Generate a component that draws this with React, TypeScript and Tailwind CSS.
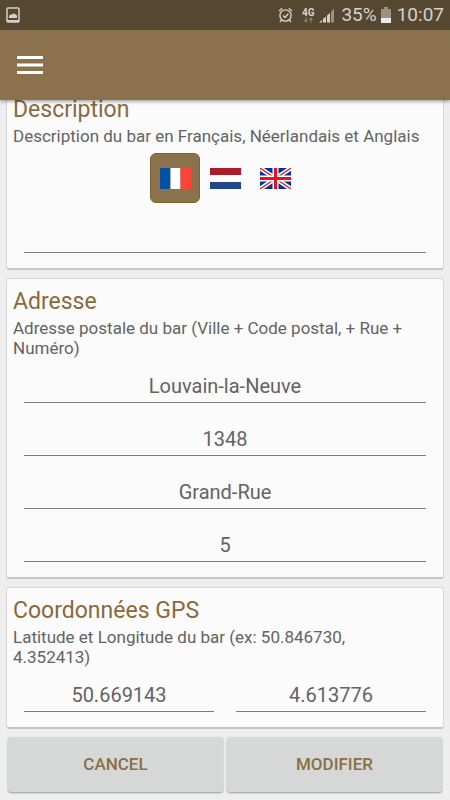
import React, { useState } from 'react';

type Lang = 'fr' | 'nl' | 'en';

const FlagFr = () => (
  <svg width="31" height="21" viewBox="0 0 31 21" aria-hidden="true">
    <rect width="10.500" height="21" fill="#0052a5" />
    <rect x="10.500" width="10" height="21" fill="#fff" />
    <rect x="20.500" width="10.500" height="21" fill="#fb4436" />
  </svg>
);

const FlagNl = () => (
  <svg width="31" height="21" viewBox="0 0 31 21" aria-hidden="true">
    <rect width="31" height="21" fill="#fff" />
    <rect width="31" height="7" fill="#ae1c28" />
    <rect y="14" width="31" height="7" fill="#21468b" />
  </svg>
);

const FlagEn = () => (
  <svg width="31" height="21" viewBox="0 0 31 21" aria-hidden="true">
    <rect width="31" height="21" fill="#0a2c9c" />
    <path d="M0 0L31 21M31 0L0 21" stroke="#fff" strokeWidth="4.4" />
    <path d="M0 0L31 21M31 0L0 21" stroke="#dc2030" strokeWidth="1.4" />
    <path d="M15.500 0V21M0 10.500H31" stroke="#fff" strokeWidth="6" />
    <path d="M15.500 0V21M0 10.500H31" stroke="#dc1428" strokeWidth="3" />
  </svg>
);

const flags: { id: Lang; label: string; icon: React.ReactNode }[] = [
  { id: 'fr', label: 'Français', icon: <FlagFr /> },
  { id: 'nl', label: 'Néerlandais', icon: <FlagNl /> },
  { id: 'en', label: 'Anglais', icon: <FlagEn /> },
];

const StatusBar = () => (
  <div className="flex h-[30px] items-center bg-[#564731] px-1.5 text-[19px] leading-[30px] text-[#d5d1cb]">
    <svg width="14" height="16" viewBox="0 0 14 16" aria-hidden="true">
      <rect x="1" y="1" width="12" height="14" rx="1" fill="none" stroke="#d5d1cb" strokeWidth="1.5" />
      <path d="M3 11V9l2-2 1 1 1.500-2 1.500 1.500L10 7l1 2v2z" fill="#d5d1cb" />
      <path d="M1 14h12" stroke="#d5d1cb" strokeWidth="2" />
    </svg>
    <div className="ml-auto flex items-center">
      <svg width="15" height="16" viewBox="0 0 15 16" fill="none" stroke="#d5d1cb" strokeWidth="1.4" aria-hidden="true">
        <circle cx="7.500" cy="8.500" r="5.600" />
        <path d="M1 4L4.200 1.200M14 4L10.800 1.200M3.500 13L2 15M11.500 13L13 15" />
        <path d="M5 8.500l2 2 3.300-3.800" />
      </svg>
      <div className="ml-2 flex w-[14px] flex-col items-center">
        <span className="text-[10px] font-bold leading-[9px]">4G</span>
        <svg width="9" height="6" viewBox="0 0 9 6" fill="#8e8474" aria-hidden="true">
          <path d="M1.500 0h1v3H4L2 6 0 3h1.500zM6.500 6h1V3H9L7 0 5 3h1.500z" />
        </svg>
      </div>
      <svg className="ml-1" width="16" height="16" viewBox="0 0 16 16" fill="#d5d1cb" aria-hidden="true">
        <path d="M0 15.500L3 13v2.500zM4 12l3-2.500v6H4zM8 8.500L11 6v9.500H8z" />
        <path d="M12 5l3-3.500v14h-3z" fill="#9b9283" />
      </svg>
      <span className="ml-1.5">35%</span>
      <svg className="ml-1" width="10" height="16" viewBox="0 0 10 16" aria-hidden="true">
        <path d="M3 0h4v2h3v14H0V2h3z" fill="#9b9283" />
        <rect y="11" width="10" height="5" fill="#eeece9" />
      </svg>
      <span className="ml-1.5">10:07</span>
    </div>
  </div>
);

interface CardProps {
  title: string;
  text: string;
  children: React.ReactNode;
}

const Card: React.FC<CardProps> = ({ title, text, children }) => (
  <section className="rounded-[3px] border border-[#d8d8d8] border-b-2 border-b-[#c6c6c6] bg-[#fbfbfb] px-1.5 pb-[15px] pt-[9px]">
    <h2 className="text-[23px] leading-7 text-[#886a3b]">{title}</h2>
    <p className="mt-0.5 pr-4 text-[17px] leading-5 text-[#636363]">{text}</p>
    {children}
  </section>
);

const Field: React.FC<{ label: string; value?: string }> = ({ label, value = '' }) => (
  <input
    type="text"
    aria-label={label}
    defaultValue={value}
    className="block h-[45px] w-full min-w-0 rounded-none border-b border-[#7d7d7d] bg-transparent pt-3 text-center text-[20px] text-[#636363] outline-none"
  />
);

const App: React.FC = () => {
  const [lang, setLang] = useState<Lang>('fr');

  return (
    <div className="min-h-screen overflow-hidden bg-[#eeeeee] font-[Roboto,sans-serif]">
      <header className="relative z-10 shadow-[0_1px_4px_rgba(0,0,0,0.45)]">
        <StatusBar />
        <div className="flex h-[70px] items-center bg-[#8b714c] px-[17px]">
          <button type="button" aria-label="Menu">
            <svg width="26" height="18" viewBox="0 0 26 18" aria-hidden="true">
              <path d="M0 1.500H26M0 9H26M0 16.500H26" stroke="#fff" strokeWidth="3" />
            </svg>
          </button>
        </div>
      </header>

      {/* The list is scrolled a little under the header */}
      <main className="-mt-[14px] flex flex-col gap-2 px-1.5">
        <Card title="Description" text="Description du bar en Français, Néerlandais et Anglais">
          <div className="mt-[7px] flex justify-center">
            {flags.map((f) => (
              <button
                key={f.id}
                type="button"
                aria-label={f.label}
                aria-pressed={lang === f.id}
                onClick={() => setLang(f.id)}
                className={`flex size-[50px] items-center justify-center rounded-md ${lang === f.id ? 'border border-[#80622f] bg-[#8b714c]' : ''}`}
              >
                {f.icon}
              </button>
            ))}
          </div>
          <div className="mx-[11px] mt-[5px]">
            <Field label="Description" />
          </div>
        </Card>

        <Card title="Adresse" text="Adresse postale du bar (Ville + Code postal, + Rue + Numéro)">
          <div className="mx-[11px] flex flex-col gap-2">
            <Field label="Ville" value="Louvain-la-Neuve" />
            <Field label="Code postal" value="1348" />
            <Field label="Rue" value="Grand-Rue" />
            <Field label="Numéro" value="5" />
          </div>
        </Card>

        <Card title="Coordonnées GPS" text="Latitude et Longitude du bar (ex: 50.846730, 4.352413)">
          <div className="mx-[11px] grid grid-cols-2 gap-[22px]">
            <Field label="Latitude" value="50.669143" />
            <Field label="Longitude" value="4.613776" />
          </div>
        </Card>

        <div className="grid grid-cols-2 gap-1 px-0.5 pb-2">
          <button type="button" className="h-[55px] rounded-[3px] bg-[#d6d8d7] text-[17px] font-medium text-[#8b6f44] shadow-[0_1px_2px_rgba(0,0,0,0.35)]">
            CANCEL
          </button>
          <button type="button" className="h-[55px] rounded-[3px] bg-[#d6d8d7] text-[17px] font-medium text-[#8b6f44] shadow-[0_1px_2px_rgba(0,0,0,0.35)]">
            MODIFIER
          </button>
        </div>
      </main>
    </div>
  );
};

export default App;
